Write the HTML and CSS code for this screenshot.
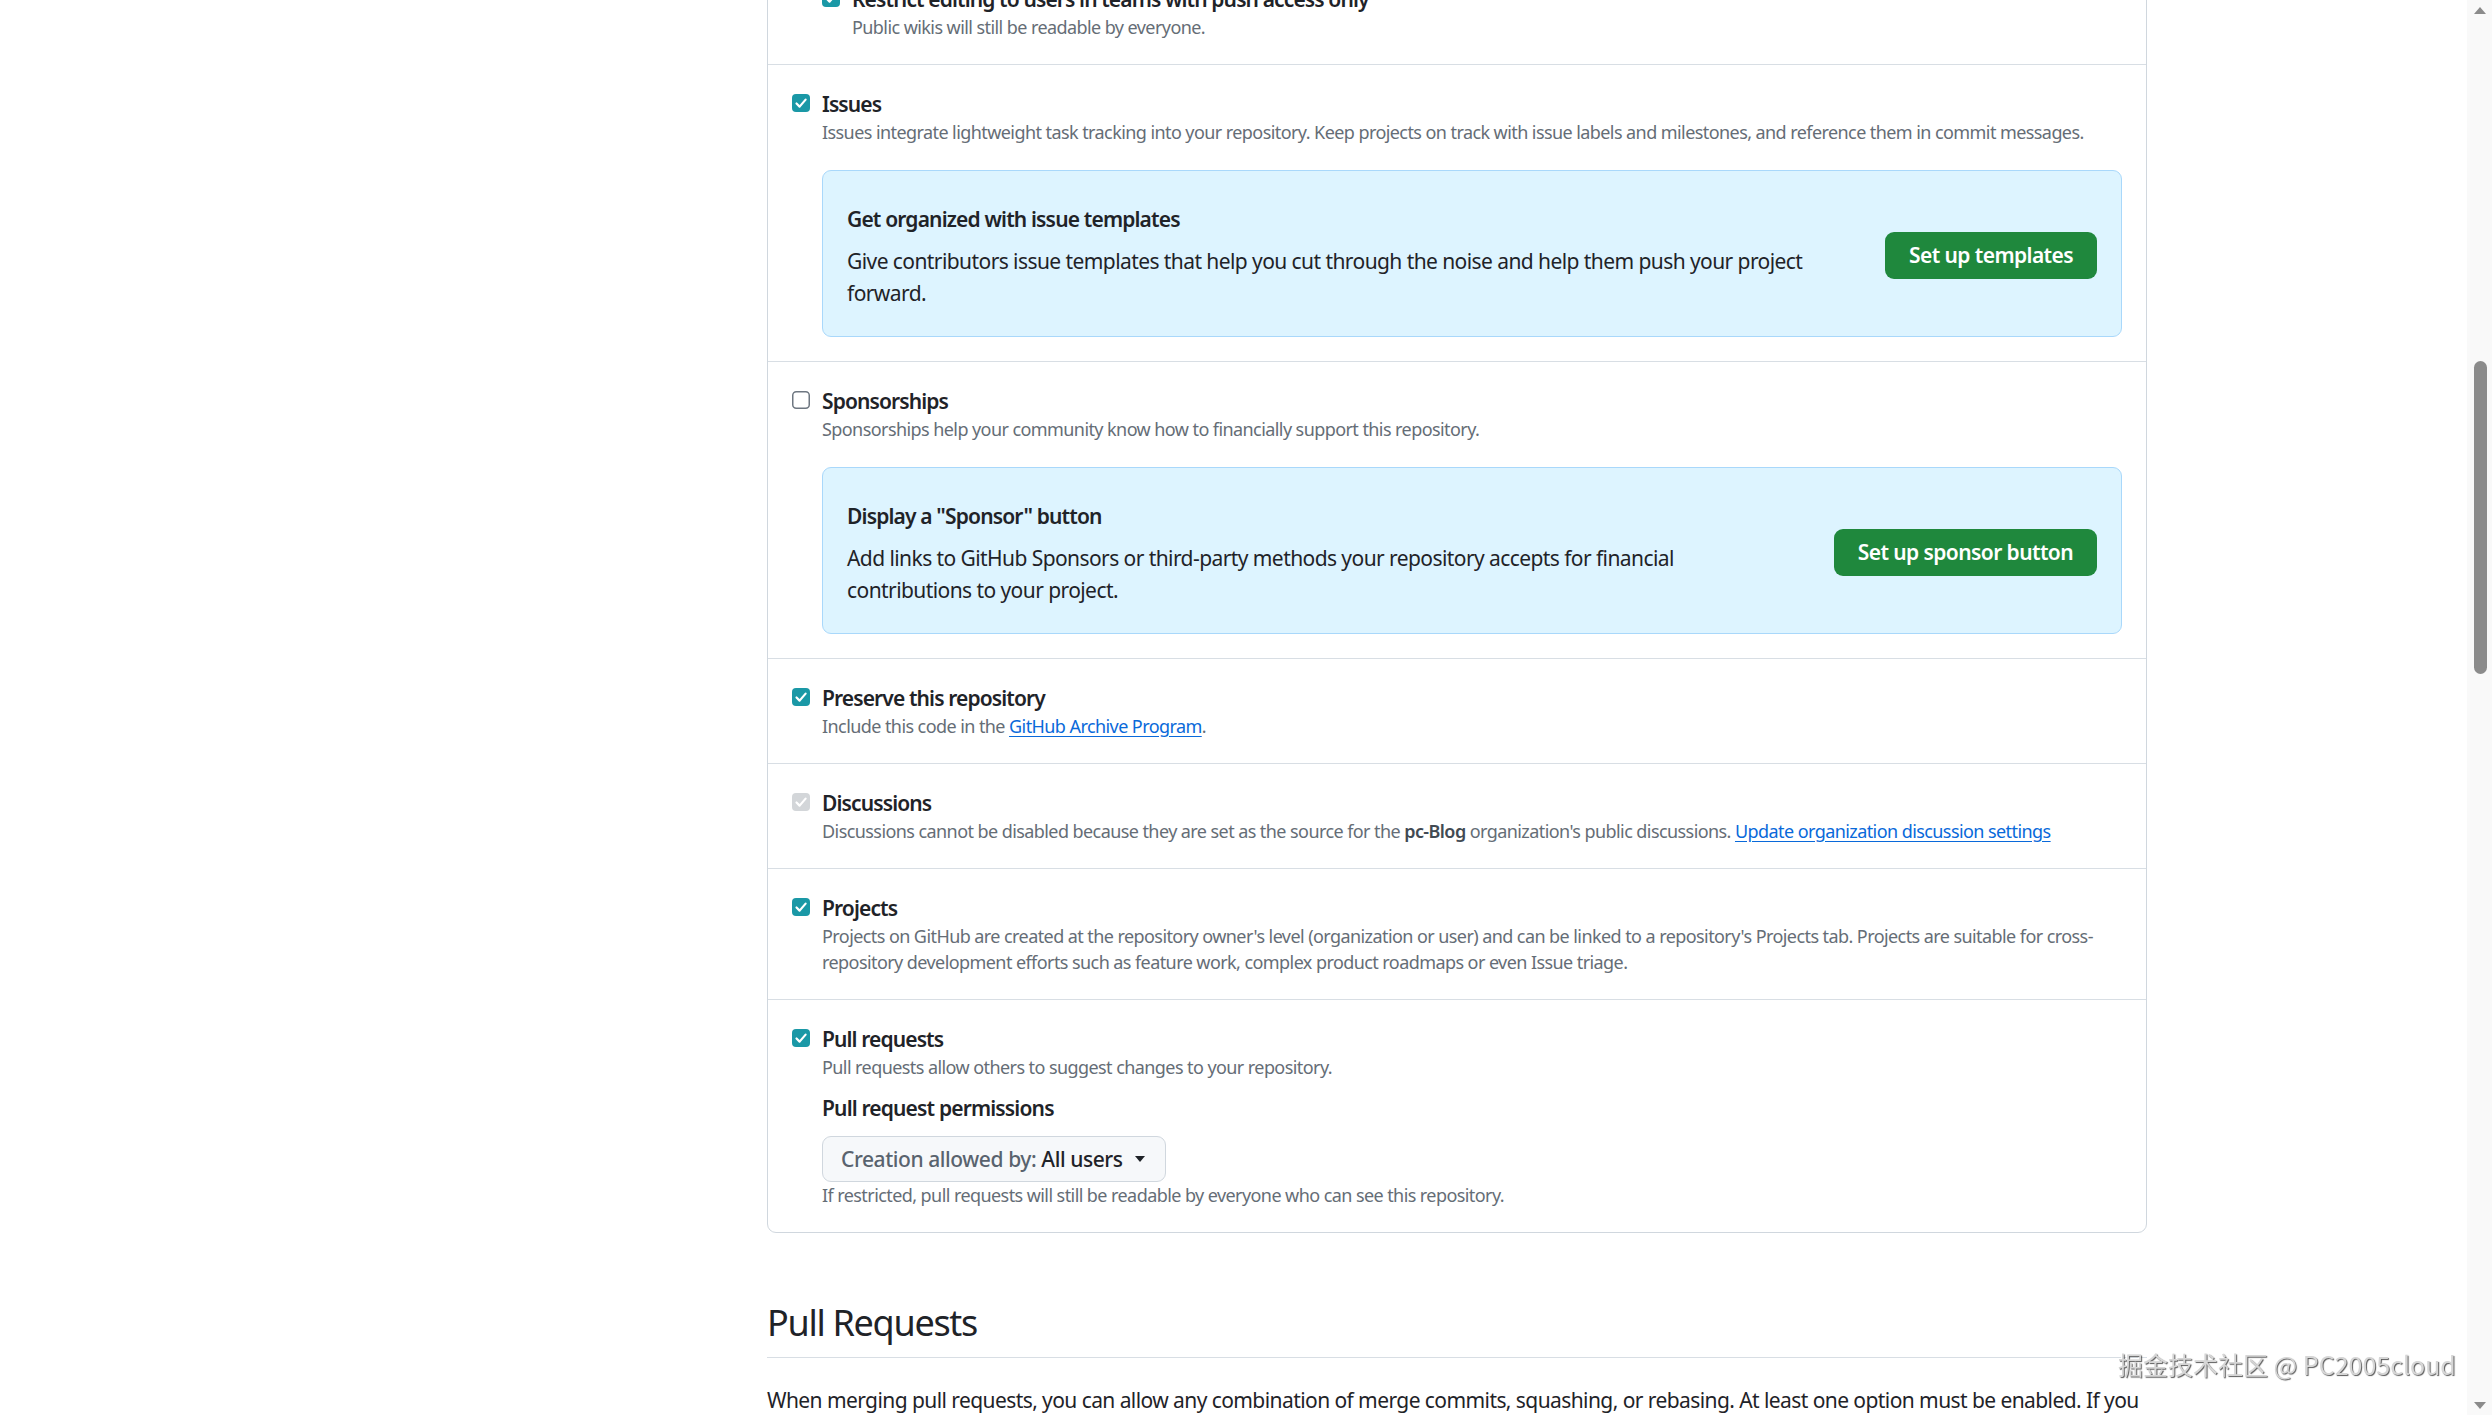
FILE: index.html
```html
<!DOCTYPE html>
<html lang="en">
<head>
<meta charset="utf-8">
<title>Settings · Features</title>
<link rel="stylesheet" href="styles.css">
</head>
<body>
<div class="layout">
  <main class="main">
    <div class="box">
      <div class="row row-first">
        <div class="check nested">
          <span class="cb checked"><svg viewBox="0 0 18 18" width="18" height="18"><rect x="0" y="0" width="18" height="18" rx="4" class="cb-fill"/><path d="M4.5 9.5 L7.6 12.6 L13.6 5.6" class="cb-mark"/></svg></span>
          <span class="label">Restrict editing to users in teams with push access only</span>
          <p class="note">Public wikis will still be readable by everyone.</p>
        </div>
      </div>

      <div class="row">
        <div class="check">
          <span class="cb checked"><svg viewBox="0 0 18 18" width="18" height="18"><rect x="0" y="0" width="18" height="18" rx="4" class="cb-fill"/><path d="M4.5 9.5 L7.6 12.6 L13.6 5.6" class="cb-mark"/></svg></span>
          <span class="label">Issues</span>
          <p class="note">Issues integrate lightweight task tracking into your repository. Keep projects on track with issue labels and milestones, and reference them in commit messages.</p>
          <div class="flash">
            <div class="flash-text">
              <h4 class="flash-title">Get organized with issue templates</h4>
              <p class="flash-body">Give contributors issue templates that help you cut through the noise and help them push your project forward.</p>
            </div>
            <a class="btn-primary" href="#">Set up templates</a>
          </div>
        </div>
      </div>

      <div class="row">
        <div class="check">
          <span class="cb unchecked"><svg viewBox="0 0 18 18" width="18" height="18"><rect x="0.75" y="0.75" width="16.5" height="16.5" rx="3.5" class="cb-empty"/></svg></span>
          <span class="label">Sponsorships</span>
          <p class="note">Sponsorships help your community know how to financially support this repository.</p>
          <div class="flash">
            <div class="flash-text">
              <h4 class="flash-title">Display a "Sponsor" button</h4>
              <p class="flash-body">Add links to GitHub Sponsors or third-party methods your repository accepts for financial contributions to your project.</p>
            </div>
            <a class="btn-primary" href="#">Set up sponsor button</a>
          </div>
        </div>
      </div>

      <div class="row">
        <div class="check">
          <span class="cb checked"><svg viewBox="0 0 18 18" width="18" height="18"><rect x="0" y="0" width="18" height="18" rx="4" class="cb-fill"/><path d="M4.5 9.5 L7.6 12.6 L13.6 5.6" class="cb-mark"/></svg></span>
          <span class="label">Preserve this repository</span>
          <p class="note">Include this code in the <a class="link" href="#">GitHub Archive Program</a>.</p>
        </div>
      </div>

      <div class="row">
        <div class="check">
          <span class="cb disabled"><svg viewBox="0 0 18 18" width="18" height="18"><rect x="0" y="0" width="18" height="18" rx="4" class="cb-dis"/><path d="M4.5 9.5 L7.6 12.6 L13.6 5.6" class="cb-mark"/></svg></span>
          <span class="label">Discussions</span>
          <p class="note">Discussions cannot be disabled because they are set as the source for the <strong class="org">pc-Blog</strong> organization's public discussions. <a class="link" href="#">Update organization discussion settings</a></p>
        </div>
      </div>

      <div class="row">
        <div class="check">
          <span class="cb checked"><svg viewBox="0 0 18 18" width="18" height="18"><rect x="0" y="0" width="18" height="18" rx="4" class="cb-fill"/><path d="M4.5 9.5 L7.6 12.6 L13.6 5.6" class="cb-mark"/></svg></span>
          <span class="label">Projects</span>
          <p class="note">Projects on GitHub are created at the repository owner's level (organization or user) and can be linked to a repository's Projects tab. Projects are suitable for cross-repository development efforts such as feature work, complex product roadmaps or even Issue triage.</p>
        </div>
      </div>

      <div class="row">
        <div class="check">
          <span class="cb checked"><svg viewBox="0 0 18 18" width="18" height="18"><rect x="0" y="0" width="18" height="18" rx="4" class="cb-fill"/><path d="M4.5 9.5 L7.6 12.6 L13.6 5.6" class="cb-mark"/></svg></span>
          <span class="label">Pull requests</span>
          <p class="note">Pull requests allow others to suggest changes to your repository.</p>
          <div class="perm">
            <h4 class="perm-title">Pull request permissions</h4>
            <button class="select-btn" type="button"><span class="sel-text"><span class="muted">Creation allowed by:</span> All users</span><span class="caret"></span></button>
            <p class="note">If restricted, pull requests will still be readable by everyone who can see this repository.</p>
          </div>
        </div>
      </div>
    </div>

    <div class="subhead">
      <h2 class="subhead-title">Pull Requests</h2>
    </div>
    <p class="lead">When merging pull requests, you can allow any combination of merge commits, squashing, or rebasing. At least one option must be enabled. If you have linear history requirement enabled on any protected branch, you must enable squashing or rebasing.</p>
  </main>
</div>

<div class="scrollbar">
  <span class="sb-up"></span>
  <span class="sb-thumb"></span>
  <span class="sb-down"></span>
</div>
<div class="watermark">掘金技术社区 @ PC2005cloud</div>
</body>
</html>
```

FILE: styles.css
```css
html, body {
  margin: 0;
  padding: 0;
  height: 100%;
  overflow: hidden;
  background: #ffffff;
}

body {
  font-family: "Noto Sans", "Open Sans", "Liberation Sans", sans-serif;
  color: #1f2328;
  letter-spacing: -0.036em;
}

.layout {
  display: flex;
  padding-left: 767px;
}

.main {
  width: 1380px;
  flex-shrink: 0;
}

.box {
  margin-top: -41px;
  border: 1px solid #d0d7de;
  border-radius: 9px;
}

.row {
  padding: 24px;
  border-top: 1px solid #d8dee4;
}

.row-first {
  border-top: none;
}

.check {
  display: grid;
  grid-template-columns: 30px 1fr;
}

.check.nested {
  margin-left: 30px;
}

.cb {
  grid-column: 1;
  grid-row: 1;
  align-self: center;
  width: 18px;
  height: 18px;
  display: block;
  margin-top: -2px;
}

.cb svg {
  display: block;
}

.cb-fill {
  fill: #1a98a6;
}

.cb-dis {
  fill: #d3d6d9;
}

.cb-empty {
  fill: #ffffff;
  stroke: #6e7781;
  stroke-width: 1.5;
}

.cb-mark {
  fill: none;
  stroke: #ffffff;
  stroke-width: 2.2;
  stroke-linecap: round;
  stroke-linejoin: round;
}

.label {
  grid-column: 2;
  grid-row: 1;
  font-size: 21px;
  font-weight: 600;
  line-height: 30px;
  letter-spacing: -0.042em;
}

.note {
  grid-column: 2;
  margin: 0;
  font-size: 18px;
  line-height: 26px;
  color: #656d76;
}

.org {
  font-weight: 600;
  color: #424a53;
}

.link {
  color: #0969da;
  text-decoration: underline;
  text-underline-offset: 3px;
}

.flash {
  grid-column: 2;
  margin-top: 25px;
  padding: 30px 24px 27px;
  background: #ddf4ff;
  border: 1px solid #a9d8fb;
  border-radius: 9px;
  display: flex;
  align-items: center;
  gap: 48px;
}

.flash-text {
  flex: 1 1 auto;
}

.flash-title {
  margin: 0 0 8px;
  font-size: 21px;
  font-weight: 600;
  line-height: 36px;
  letter-spacing: -0.04em;
}

.flash-body {
  margin: 0;
  font-size: 21px;
  line-height: 32px;
}

.btn-primary {
  flex-shrink: 0;
  display: inline-flex;
  align-items: center;
  height: 47px;
  padding: 0 24px;
  box-sizing: border-box;
  background: #1f883d;
  color: #ffffff;
  border-radius: 9px;
  font-size: 21px;
  font-weight: 600;
  letter-spacing: -0.028em;
  text-decoration: none;
  white-space: nowrap;
}

.perm {
  grid-column: 2;
}

.perm-title {
  margin: 13px 0 13px;
  font-size: 21px;
  font-weight: 600;
  line-height: 30px;
  letter-spacing: -0.04em;
}

.select-btn {
  display: inline-flex;
  align-items: center;
  height: 46px;
  padding: 0 20px 0 18px;
  background: #f6f8fa;
  border: 1px solid #d0d7de;
  border-radius: 9px;
  font-family: inherit;
  letter-spacing: -0.02em;
  font-size: 21px;
  font-weight: 500;
  color: #1f2328;
  white-space: nowrap;
}

.muted {
  color: #59636e;
}

.caret {
  display: inline-block;
  width: 0;
  height: 0;
  margin-left: 12px;
  border-top: 6px solid #1f2328;
  border-left: 5px solid transparent;
  border-right: 5px solid transparent;
}

.subhead {
  margin-top: 67px;
  padding-bottom: 12px;
  border-bottom: 1px solid #d8dee4;
}

.subhead-title {
  margin: 0;
  font-size: 36px;
  font-weight: 400;
  line-height: 45px;
  letter-spacing: -0.036em;
}

.lead {
  margin: 27px 0 0;
  font-size: 21px;
  line-height: 31px;
}

.scrollbar {
  position: fixed;
  top: 0;
  right: 0;
  bottom: 0;
  width: 25px;
  background: #f9f9f9;
}

.sb-thumb {
  position: absolute;
  top: 361px;
  left: 7px;
  width: 13px;
  height: 313px;
  border-radius: 7px;
  background: #8b8b8b;
}

.sb-up {
  position: absolute;
  top: 7px;
  left: 7px;
  width: 0;
  height: 0;
  border-bottom: 7px solid #8b8b8b;
  border-left: 6px solid transparent;
  border-right: 6px solid transparent;
}

.sb-down {
  position: absolute;
  bottom: 6px;
  left: 7px;
  width: 0;
  height: 0;
  border-top: 7px solid #8b8b8b;
  border-left: 6px solid transparent;
  border-right: 6px solid transparent;
}

.watermark {
  position: fixed;
  left: 2118px;
  top: 1347px;
  font-family: "Noto Sans CJK SC", "Noto Sans", sans-serif;
  font-size: 25px;
  line-height: 34px;
  letter-spacing: 0;
  color: #d6d6d6;
  text-shadow: 1px 1px 1px rgba(0, 0, 0, 0.65), -1px -1px 0 rgba(255, 255, 255, 0.9);
  white-space: nowrap;
}
```
